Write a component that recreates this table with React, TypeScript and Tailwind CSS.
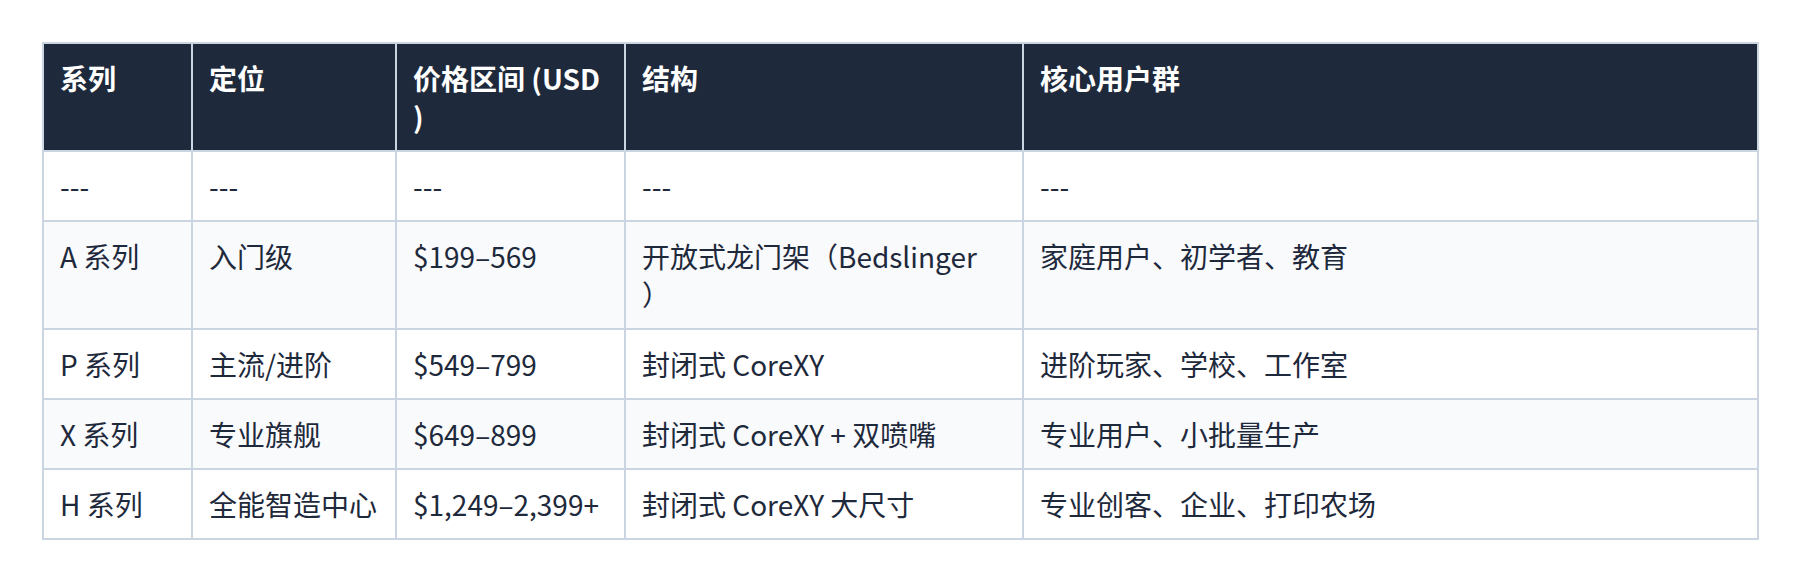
import React from 'react';

const rows = [
  ['---', '---', '---', '---', '---'],
  ['A 系列', '入门级', '$199–569', 'bedslinger', '家庭用户、初学者、教育'],
  ['P 系列', '主流/进阶', '$549–799', '封闭式 CoreXY', '进阶玩家、学校、工作室'],
  ['X 系列', '专业旗舰', '$649–899', '封闭式 CoreXY + 双喷嘴', '专业用户、小批量生产'],
  ['H 系列', '全能智造中心', '$1,249–2,399+', '封闭式 CoreXY 大尺寸', '专业创客、企业、打印农场'],
];

const cell = 'border-2 border-[#cbd5e1] px-4 py-[15px] align-top text-left leading-[38px]';

const App: React.FC = () => {
  return (
    <div
      className="min-h-[580px] bg-white pl-[42px] pr-[41px] pt-[42px]"
      style={{ fontFamily: '"Noto Sans CJK SC", "Noto Sans", sans-serif' }}
    >
      <table className="w-full table-fixed border-collapse text-[28px] text-[#1e293b]">
        <colgroup>
          <col className="w-[149px]" />
          <col className="w-[204px]" />
          <col className="w-[229px]" />
          <col className="w-[398px]" />
          <col />
        </colgroup>
        <thead>
          <tr className="bg-[#1e293b] text-white">
            <th className={`${cell} font-bold`}>系列</th>
            <th className={`${cell} font-bold`}>定位</th>
            <th className={`${cell} font-bold`}>
              价格区间 (USD
              <br />)
            </th>
            <th className={`${cell} font-bold`}>结构</th>
            <th className={`${cell} font-bold`}>核心用户群</th>
          </tr>
        </thead>
        <tbody>
          {rows.map((row, i) => (
            <tr key={i} className={i % 2 === 1 ? 'bg-[#f8fafc]' : 'bg-white'}>
              {row.map((text, j) => (
                <td key={j} className={cell}>
                  {text === 'bedslinger' ? (
                    <>
                      开放式龙门架（Bedslinger
                      <br />）
                    </>
                  ) : (
                    text
                  )}
                </td>
              ))}
            </tr>
          ))}
        </tbody>
      </table>
    </div>
  );
};

export default App;
